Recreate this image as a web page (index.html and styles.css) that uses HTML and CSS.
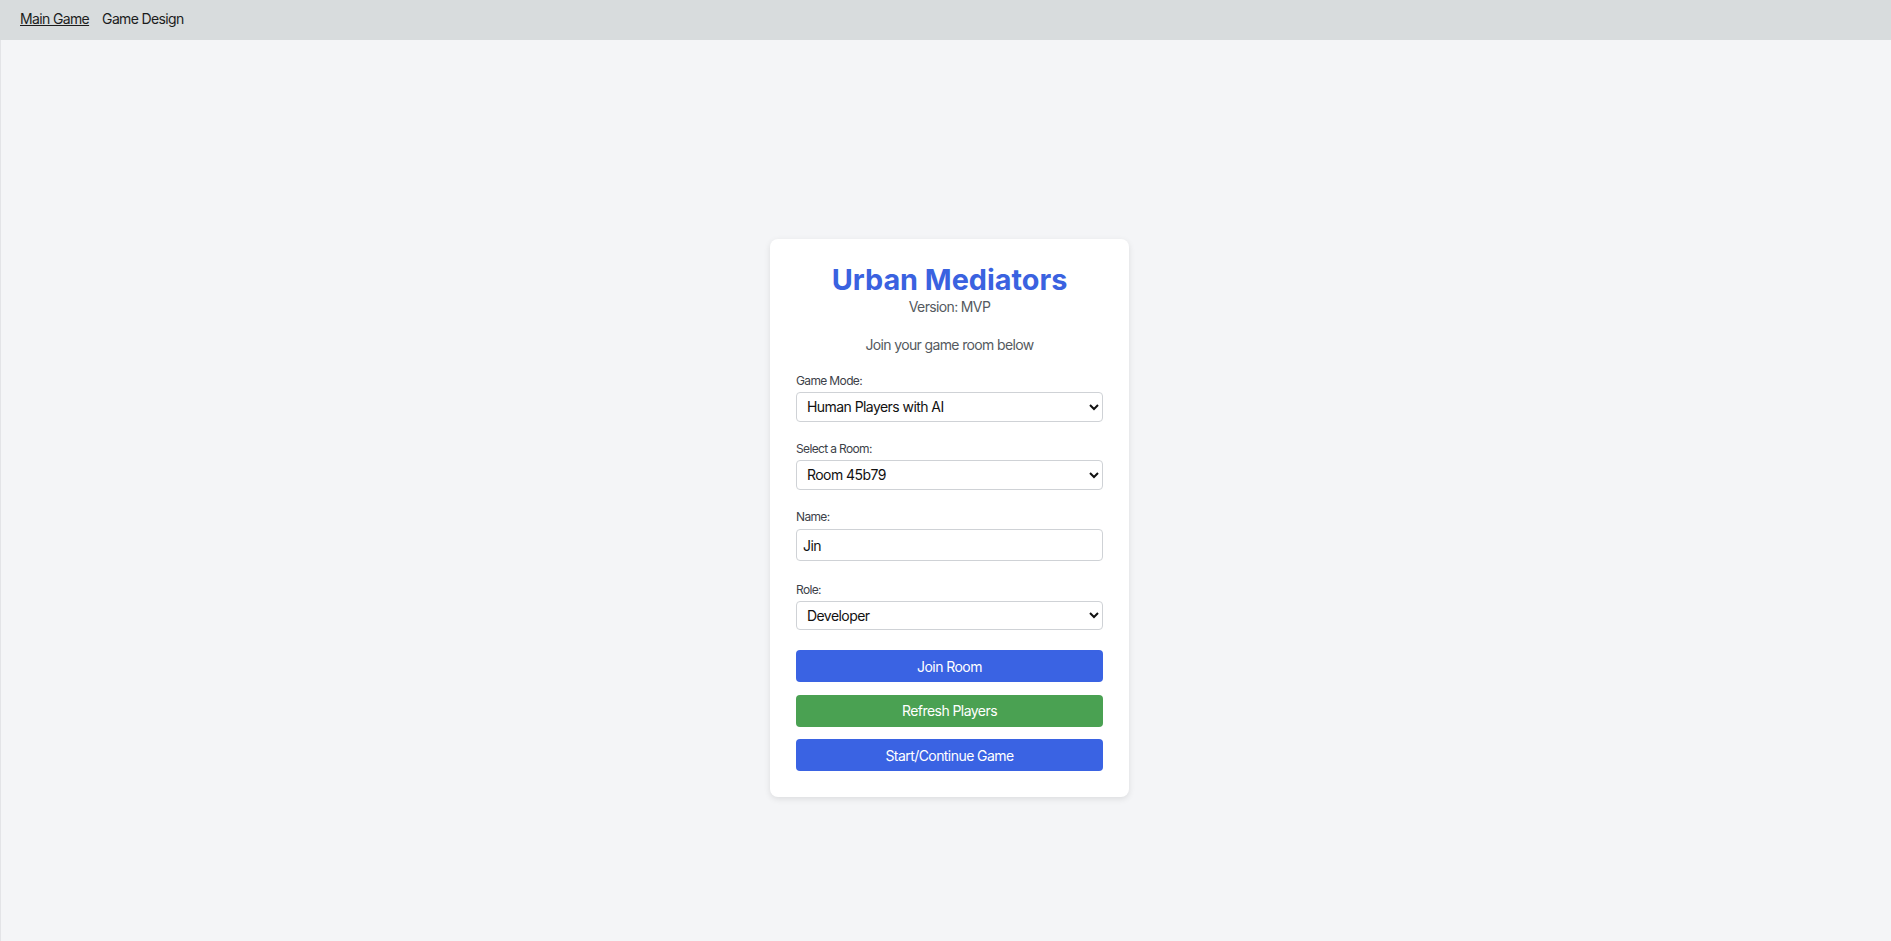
FILE: index.html
```html
<!DOCTYPE html>
<html lang="en">
<head>
<meta charset="utf-8">
<title>Urban Mediators</title>
<link rel="stylesheet" href="styles.css">
</head>
<body>
<nav class="topnav">
  <a class="nav-link active" href="#">Main Game</a>
  <a class="nav-link" href="#">Game Design</a>
</nav>
<main class="page">
  <div class="card">
    <h1 class="title">Urban Mediators</h1>
    <p class="version">Version: MVP</p>
    <p class="subtitle">Join your game room below</p>
    <div class="group">
      <label class="label" for="mode">Game Mode:</label>
      <select id="mode" class="select"><option>Human Players with AI</option></select>
    </div>
    <div class="group">
      <label class="label" for="room">Select a Room:</label>
      <select id="room" class="select"><option>Room 45b79</option></select>
    </div>
    <div class="group group-name">
      <label class="label" for="name">Name:</label>
      <input id="name" class="input" type="text" value="Jin">
    </div>
    <div class="group group-last">
      <label class="label" for="role">Role:</label>
      <select id="role" class="select"><option>Developer</option></select>
    </div>
    <div class="buttons">
      <button class="btn btn-blue">Join Room</button>
      <button class="btn btn-green">Refresh Players</button>
      <button class="btn btn-blue">Start/Continue Game</button>
    </div>
  </div>
</main>
</body>
</html>
```
FILE: styles.css
```css
* { box-sizing: border-box; }
html, body { margin: 0; padding: 0; }
body {
  font-family: Inter, "Noto Sans", sans-serif;
  letter-spacing: -0.04em;
  background: #f4f5f7;
  color: #222;
  min-height: 941px;
}
.topnav {
  height: 40px;
  background: #d8dcdd;
  display: flex;
  align-items: center;
  gap: 13px;
  padding-left: 20px;
  padding-bottom: 3px;
}
.nav-link {
  font-size: 14px;
  line-height: 17px;
  color: #1c1c1c;
  text-decoration: none;
}
.nav-link.active { text-decoration: underline; }
.page {
  display: flex;
  justify-content: center;
  align-items: flex-start;
  padding: 199px 0 0 7px;
  min-height: 901px;
  border-left: 1px solid #e3e4e7;
}
.card {
  width: 359px;
  background: #fff;
  border-radius: 8px;
  box-shadow: 0 2px 6px rgba(0,0,0,0.10);
  padding: 21.5px 26px 26px 26px;
}
.title {
  margin: 0 0 0.5px;
  text-align: center;
  font-size: 28.8px;
  line-height: 37px;
  font-weight: 700;
  letter-spacing: 0;
  color: #3a62e0;
}
.version {
  margin: 0;
  text-align: center;
  font-size: 14px;
  line-height: 17px;
  color: #555a60;
}
.subtitle {
  margin: 20.5px 0 21.5px;
  text-align: center;
  font-size: 14px;
  line-height: 17px;
  color: #555a60;
}
.group {
  display: flex;
  flex-direction: column;
  margin-bottom: 20.5px;
}
.group-name { margin-bottom: 21.5px; }
.group-name .label { margin-bottom: 5px; }
.group-last { margin-bottom: 20px; }
.label {
  font-size: 12px;
  line-height: 14px;
  color: #3d4249;
  margin-bottom: 4px;
}
.select {
  height: 29.5px;
  width: 100%;
  font-family: Inter, "Noto Sans", sans-serif;
  letter-spacing: -0.04em;
  font-size: 14px;
  color: #111;
  background: #fff;
  border: 1px solid #cfd2d6;
  border-radius: 4px;
  padding: 0 6px;
}
.input {
  height: 32px;
  width: 100%;
  font-family: Inter, "Noto Sans", sans-serif;
  letter-spacing: -0.04em;
  font-size: 14px;
  color: #111;
  background: #fff;
  border: 1px solid #cfd2d6;
  border-radius: 4px;
  padding: 0 6px;
}
.buttons {
  display: flex;
  flex-direction: column;
  gap: 12.5px;
}
.btn {
  height: 32px;
  width: 100%;
  border: none;
  border-radius: 4px;
  color: #fff;
  font-family: Inter, "Noto Sans", sans-serif;
  letter-spacing: -0.04em;
  font-size: 14px;
  cursor: pointer;
}
.btn-blue { background: #3a63e3; }
.btn-green { background: #4aa152; }
```
